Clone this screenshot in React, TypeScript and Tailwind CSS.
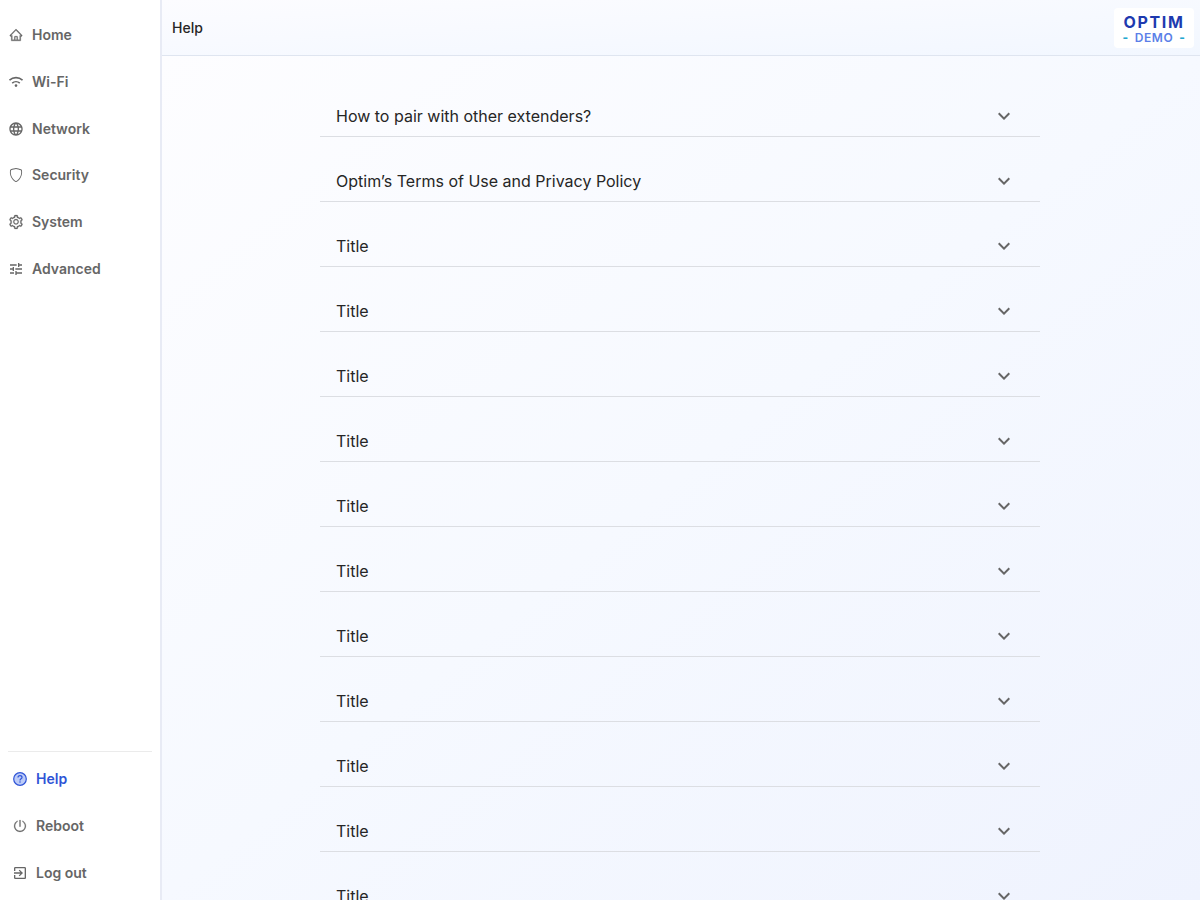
import { useState } from "react";
import {
  AiOutlineHome,
  AiOutlinePoweroff,
  AiOutlineSetting,
} from "react-icons/ai";
import { BsShield } from "react-icons/bs";
import {
  MdExitToApp,
  MdKeyboardArrowDown,
  MdLanguage,
  MdTune,
} from "react-icons/md";
import type { IconType } from "react-icons";

interface NavItem {
  label: string;
  icon: IconType | typeof WifiIcon;
  iconClass?: string;
  active?: boolean;
}

interface HelpTopic {
  title: string;
  body: string;
}

function WifiIcon({ className }: { className?: string }) {
  return (
    <svg
      viewBox="0 0 14 14"
      fill="none"
      stroke="currentColor"
      strokeWidth="1.6"
      className={className}
    >
      <path d="M.5 5.2a9.6 9.6 0 0 1 13 0" />
      <path d="M3.2 8.2a5.7 5.7 0 0 1 7.6 0" />
      <circle cx="7" cy="10.6" r="1.3" fill="currentColor" stroke="none" />
    </svg>
  );
}

function HelpIcon({ className }: { className?: string }) {
  return (
    <svg
      viewBox="0 0 14 14"
      fill="none"
      stroke="currentColor"
      strokeWidth="1.2"
      className={className}
    >
      <circle cx="7" cy="7" r="6.3" fill="#bccbf8" />
      <path d="M5 5.6c0-1.1.9-1.9 2-1.9s2 .8 2 1.8c0 1.3-2 1.4-2 2.9" />
      <circle cx="7" cy="10.1" r=".75" fill="currentColor" stroke="none" />
    </svg>
  );
}

const mainNav: NavItem[] = [
  { label: "Home", icon: AiOutlineHome, iconClass: "p-px stroke-[24px]" },
  { label: "Wi-Fi", icon: WifiIcon, iconClass: "p-px" },
  { label: "Network", icon: MdLanguage },
  { label: "Security", icon: BsShield, iconClass: "p-px" },
  { label: "System", icon: AiOutlineSetting, iconClass: "stroke-[16px]" },
  { label: "Advanced", icon: MdTune },
];

const footerNav: NavItem[] = [
  { label: "Help", icon: HelpIcon, iconClass: "p-px", active: true },
  { label: "Reboot", icon: AiOutlinePoweroff, iconClass: "p-px stroke-[16px]" },
  { label: "Log out", icon: MdExitToApp },
];

const topics: HelpTopic[] = [
  { title: "How to pair with other extenders?", body: "" },
  { title: "Optim’s Terms of Use and Privacy Policy", body: "" },
  ...Array.from({ length: 11 }, () => ({ title: "Title", body: "" })),
];

function NavLink({ item }: { item: NavItem }) {
  const Icon = item.icon;
  return (
    <a
      href="#"
      aria-current={item.active ? "page" : undefined}
      className={`flex items-center gap-2 text-sm font-semibold ${
        item.active ? "text-[#2f54d6]" : "text-[#666666]"
      }`}
    >
      <Icon className={`size-4 ${item.iconClass ?? ""}`} />
      {item.label}
    </a>
  );
}

function Sidebar() {
  return (
    <aside className="relative z-10 flex w-40 shrink-0 flex-col justify-between bg-white px-2 pt-3 pb-1 shadow-[2px_0_0_#e8ebf5]">
      <nav aria-label="Main" className="grid min-h-70 auto-rows-fr">
        {mainNav.map((item) => (
          <NavLink key={item.label} item={item} />
        ))}
      </nav>
      <nav aria-label="Support" className="border-t border-[#ebebeb] pt-1">
        <div className="grid min-h-35 auto-rows-fr px-1">
          {footerNav.map((item) => (
            <NavLink key={item.label} item={item} />
          ))}
        </div>
      </nav>
    </aside>
  );
}

function Logo() {
  return (
    <div className="flex w-20 flex-col items-center rounded bg-white py-1">
      <span className="text-base leading-5 font-bold tracking-widest text-[#1e3aaf]">
        OPTIM
      </span>
      <span className="flex gap-1.5 text-xs leading-3 font-semibold tracking-wider text-[#5b7fe8]">
        <span className="font-extrabold text-[#22a7d0]">-</span>
        DEMO
        <span className="font-extrabold text-[#22a7d0]">-</span>
      </span>
    </div>
  );
}

function TopicRow({ topic }: { topic: HelpTopic }) {
  const [open, setOpen] = useState(false);

  return (
    <li className="border-b border-[#dcdee3]">
      <button
        type="button"
        aria-expanded={open}
        onClick={() => setOpen(!open)}
        className="flex w-full items-center justify-between px-4 pt-8 pb-2 text-left"
      >
        <span className="text-base text-[#262626]">{topic.title}</span>
        <MdKeyboardArrowDown
          className={`mr-2 size-6 text-[#666666] ${open ? "rotate-180" : ""}`}
        />
      </button>
      {open && topic.body && <p className="px-4 pb-4 text-sm">{topic.body}</p>}
    </li>
  );
}

export default function App() {
  return (
    <div className="flex h-screen font-[Inter,sans-serif]">
      <Sidebar />
      <div className="flex min-w-0 flex-1 flex-col">
        {/* Header */}
        <header className="flex h-14 shrink-0 items-center justify-between border-b border-[#dfe5f0] bg-linear-to-br from-[#fcfcff] to-[#f2f7ff] pr-1.5 pl-3">
          <h1 className="text-sm font-medium text-[#262626]">Help</h1>
          <Logo />
        </header>

        {/* Topics */}
        <main className="flex-1 overflow-y-auto bg-linear-to-br from-[#fdfdff] via-[#f6f9ff] to-[#eff3fe] [scrollbar-width:none]">
          <ul className="mx-auto max-w-[720px] pt-4">
            {topics.map((topic, i) => (
              <TopicRow key={i} topic={topic} />
            ))}
          </ul>
        </main>
      </div>
    </div>
  );
}
